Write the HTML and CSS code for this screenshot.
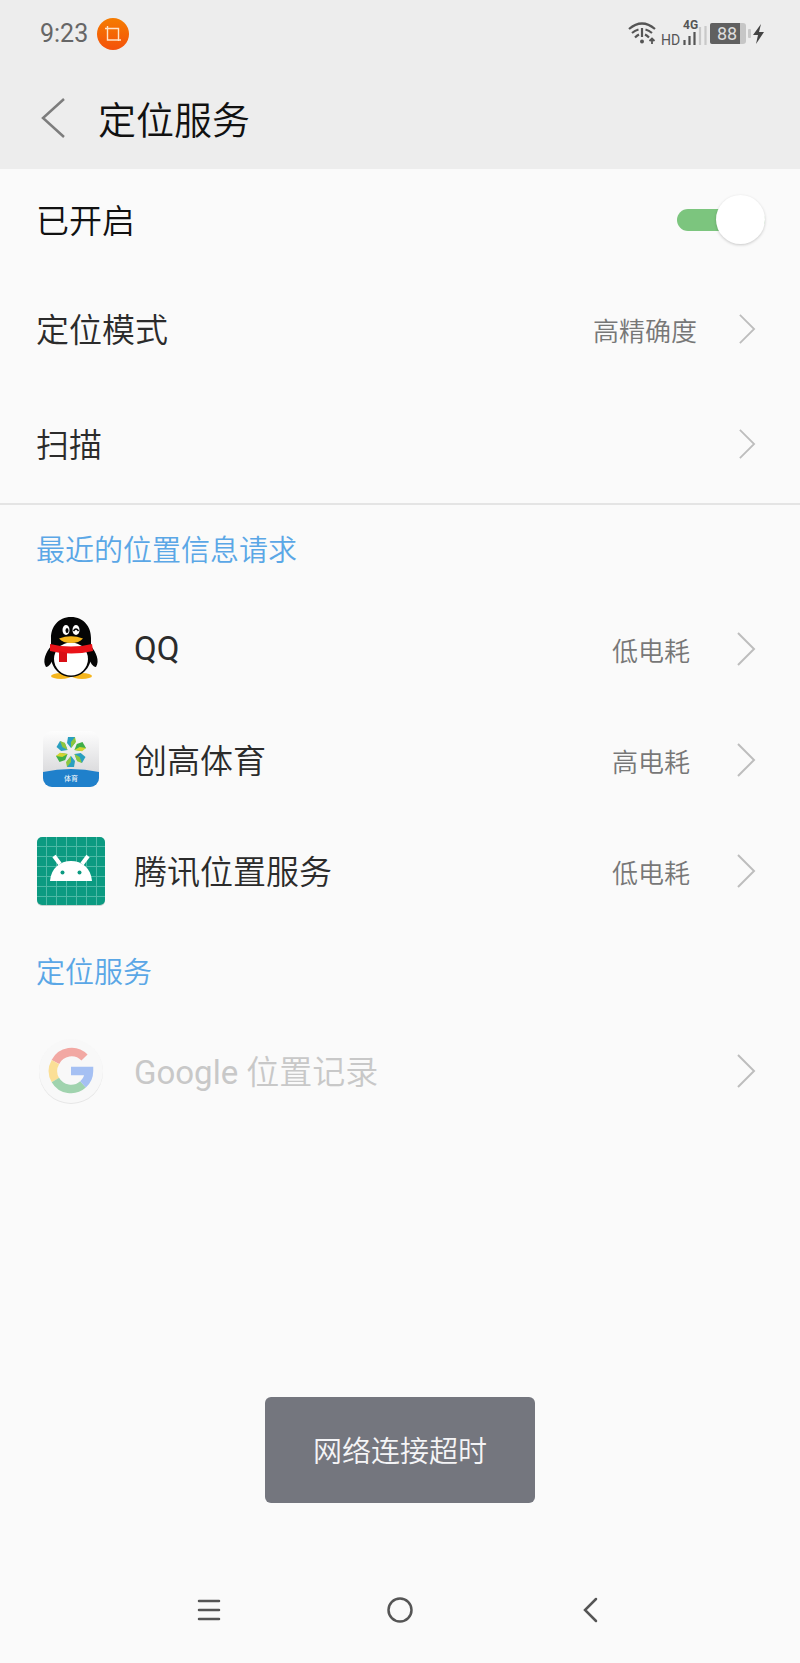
FILE: index.html
```
<!DOCTYPE html>
<html lang="zh-CN">
<head>
    <meta charset="UTF-8">
    <meta name="viewport" content="width=device-width, initial-scale=1.0">
    <title>定位服务</title>
    <link rel="stylesheet" href="styles.css">
</head>
<body>

    <svg class="defs" aria-hidden="true">
        <symbol id="arrow" viewBox="0 0 20 36">
            <path d="M2 2 L18 18 L2 34" fill="none" stroke="#bdbdbd" stroke-width="2"/>
        </symbol>
    </svg>

    <header class="header">
        <div class="status-bar">
            <span class="time">9:23</span>
            <svg class="crop-icon" viewBox="0 0 32 32">
                <defs>
                    <linearGradient id="orange" x1="0" y1="0" x2="0" y2="1">
                        <stop offset="0" stop-color="#f57c00"/>
                        <stop offset="1" stop-color="#f4510b"/>
                    </linearGradient>
                </defs>
                <circle cx="16" cy="16" r="16" fill="url(#orange)"/>
                <path d="M8 10.5H21.5V23M10.500 8V22H24" fill="none" stroke="#ffe3c8" stroke-width="1.400"/>
            </svg>
            <svg class="status-icons" viewBox="0 0 140 40">
                <!-- wifi -->
                <g fill="none" stroke="#555" stroke-width="2.200">
                    <path d="M4 15Q17 4 30 15"/>
                    <path d="M7 19Q10 16.500 13.500 15.500M20.500 15.500Q24 16.500 27 19"/>
                    <path d="M10 23.500Q12 21.500 14 20.500M20 20.500Q22 21.500 24 23.500"/>
                    <path d="M17 14V23"/>
                    <path d="M27 30V25M24.500 27L27 24.500L29.500 27" stroke-width="1.800"/>
                </g>
                <circle cx="17" cy="27.500" r="2" fill="#555"/>
                <text class="hd" x="36" y="31">HD</text>
                <!-- signal -->
                <text class="net" x="58" y="15">4G</text>
                <path d="M59.500 26V31M64.500 22V31M69.500 18V31" stroke="#555" stroke-width="2.200"/>
                <path d="M75 13V31M80.500 12V31" stroke="#c9c9c9" stroke-width="2.200"/>
                <!-- battery -->
                <rect x="85" y="9" width="36" height="21" rx="3" fill="#c6c6c6"/>
                <path d="M87 9H115V30H87Q85 30 85 28V11Q85 9 87 9Z" fill="#606060"/>
                <rect x="123" y="15" width="3" height="9" rx="1" fill="#c9c9c9"/>
                <text class="level" x="92" y="26">88</text>
                <path d="M136 10L128 21H133L131 30L139 18H134Z" fill="#444"/>
            </svg>
        </div>
        <div class="title-bar">
            <button class="back-button" aria-label="返回">
                <svg width="26" height="42" viewBox="0 0 26 42">
                    <path d="M24 2L3 21L24 40" fill="none" stroke="#7d7d7d" stroke-width="2.500"/>
                </svg>
            </button>
            <h1 class="title">定位服务</h1>
        </div>
    </header>

    <main class="content">
        <div class="row switch-row">
            <label class="label on" for="location">已开启</label>
            <input class="switch" id="location" type="checkbox" role="switch" checked>
        </div>
        <a class="row" href="#mode">
            <span class="label">定位模式</span>
            <span class="value">高精确度</span>
            <svg class="arrow"><use href="#arrow"/></svg>
        </a>
        <a class="row" href="#scan">
            <span class="label">扫描</span>
            <svg class="arrow"><use href="#arrow"/></svg>
        </a>

        <section class="section recent">
            <h2 class="section-title">最近的位置信息请求</h2>
            <a class="row app" href="#qq">
                <svg class="app-icon" viewBox="0 0 70 70">
                    <ellipse cx="25" cy="62" rx="10" ry="3" fill="#f5b51c"/>
                    <ellipse cx="46" cy="62" rx="10" ry="3" fill="#f5b51c"/>
                    <path d="M15 32C10 38 6 47 10 53C13 53 16 48 17 45ZM55 32C60 38 64 47 60 53C57 53 54 48 53 45Z" fill="#050505"/>
                    <path d="M35 3C22 3 15 13 15 24V34C12 49 21 63 35 63S58 49 55 34V24C55 13 48 3 35 3Z" fill="#050505"/>
                    <ellipse cx="35" cy="45" rx="17" ry="16.500" fill="#fff"/>
                    <path d="M14 30Q35 35 56 30L57 37Q35 42 14 37Z" fill="#ea1218"/>
                    <path d="M23 37L31 39V48H23Z" fill="#d90f16"/>
                    <ellipse cx="30" cy="16" rx="3.500" ry="5" fill="#fff"/>
                    <ellipse cx="40" cy="16" rx="3.500" ry="5" fill="#fff"/>
                    <ellipse cx="31" cy="16.500" rx="1.500" ry="2.500" fill="#050505"/>
                    <path d="M37.500 17Q40 13 42.500 17" fill="none" stroke="#050505" stroke-width="1.500"/>
                    <path d="M23 24.500Q35 20 47 24.500Q43 29 35 29T23 24.500Z" fill="#f5b51c"/>
                </svg>
                <span class="label latin">QQ</span>
                <span class="value">低电耗</span>
                <svg class="arrow"><use href="#arrow"/></svg>
            </a>
            <a class="row app" href="#sport">
                <svg class="app-icon" viewBox="0 0 70 70">
                    <defs>
                        <linearGradient id="silver" x1="0" y1="0" x2="0" y2="1">
                            <stop offset="0" stop-color="#fdfdfd"/>
                            <stop offset="1" stop-color="#cfcfd2"/>
                        </linearGradient>
                        <clipPath id="tile"><rect x="7" y="6" width="56" height="56" rx="9"/></clipPath>
                        <g id="leaf">
                            <path d="M35 23L31 18L32 12L39 12V18Z" fill="#2a9fc0"/>
                            <path d="M35 23L35 17L39 12L40 17Z" fill="#8cc63f"/>
                        </g>
                        <g id="leaf-green">
                            <path d="M35 23L31 18L32 12L39 12V18Z" fill="#3fae49"/>
                            <path d="M35 23L35 17L39 12L40 17Z" fill="#d3d531"/>
                        </g>
                    </defs>
                    <g clip-path="url(#tile)">
                        <rect x="7" y="6" width="56" height="56" fill="url(#silver)"/>
                        <path d="M7 47Q35 41 63 47V62H7Z" fill="#1f80cb"/>
                    </g>
                    <use href="#leaf"/>
                    <use href="#leaf-green" transform="rotate(60 35 27)"/>
                    <use href="#leaf" transform="rotate(120 35 27)"/>
                    <use href="#leaf" transform="rotate(180 35 27)"/>
                    <use href="#leaf-green" transform="rotate(240 35 27)"/>
                    <use href="#leaf" transform="rotate(300 35 27)"/>
                    <text class="tile-text" x="35" y="56">体育</text>
                </svg>
                <span class="label">创高体育</span>
                <span class="value">高电耗</span>
                <svg class="arrow"><use href="#arrow"/></svg>
            </a>
            <a class="row app" href="#tencent">
                <svg class="app-icon" viewBox="0 0 70 70">
                    <rect x="1" y="2" width="68" height="68" rx="5" fill="#c9d3d0"/>
                    <rect x="1" y="1" width="68" height="68" rx="5" fill="#0b9a81"/>
                    <path d="M10.500 1V69M20.500 1V69M30.500 1V69M40.500 1V69M50.500 1V69M60.500 1V69M1 10.500H69M1 20.500H69M1 30.500H69M1 40.500H69M1 50.500H69M1 60.500H69" stroke="#4db8a5" stroke-width="1"/>
                    <path d="M18 20L24 28M52 20L46 28" stroke="#fff" stroke-width="4"/>
                    <path d="M14 45C15 32 24 25 35 25S55 32 56 45Z" fill="#fff"/>
                    <circle cx="26.500" cy="36.500" r="2" fill="#0b9a81"/>
                    <circle cx="43.500" cy="36.500" r="2" fill="#0b9a81"/>
                </svg>
                <span class="label">腾讯位置服务</span>
                <span class="value">低电耗</span>
                <svg class="arrow"><use href="#arrow"/></svg>
            </a>
        </section>

        <section class="section">
            <h2 class="section-title">定位服务</h2>
            <a class="row app disabled" href="#google">
                <svg class="app-icon" viewBox="0 0 70 70">
                    <circle cx="35" cy="36" r="32" fill="#e6e6e6"/>
                    <circle cx="35" cy="35" r="32" fill="#f8f8f8"/>
                    <g fill="none" stroke-width="8.500">
                        <path d="M48.500 21.500A18 18 0 0 0 19.400 26" stroke="#f2a8a3"/>
                        <path d="M19.400 26A18 18 0 0 0 19.400 44" stroke="#fbdf96"/>
                        <path d="M19.400 44A18 18 0 0 0 47 48.400" stroke="#a0d3ae"/>
                        <path d="M47 48.400A18 18 0 0 0 53 35H35" stroke="#a5c0f3"/>
                    </g>
                </svg>
                <span class="label"><span class="latin">Google</span> 位置记录</span>
                <svg class="arrow"><use href="#arrow"/></svg>
            </a>
        </section>
    </main>

    <div class="toast-area">
        <div class="toast" role="status">网络连接超时</div>
    </div>

    <nav class="nav-bar">
        <button class="nav-button" aria-label="菜单">
            <svg width="30" height="30" viewBox="0 0 30 30">
                <path d="M5 6H25M5 15H25M5 24H25"/>
            </svg>
        </button>
        <button class="nav-button" aria-label="主页">
            <svg width="30" height="30" viewBox="0 0 30 30">
                <circle cx="15" cy="15" r="11.500"/>
            </svg>
        </button>
        <button class="nav-button" aria-label="返回">
            <svg width="30" height="30" viewBox="0 0 30 30">
                <path d="M20 4L9 15L20 26"/>
            </svg>
        </button>
    </nav>

</body>
</html>
```
FILE: styles.css
```
* {
    box-sizing: border-box;
}

body {
    margin: 0;
    min-height: 100vh;
    display: flex;
    flex-direction: column;
    background-color: #fafafa;
    color: #2b2b2b;
    font-family: Roboto, "Noto Sans CJK SC", sans-serif;
    font-weight: 350;
}

button {
    padding: 0;
    border: none;
    background-color: transparent;
    cursor: pointer;
}

svg {
    display: block;
    flex-shrink: 0;
}

.defs {
    position: absolute;
    width: 0;
    height: 0;
}

.header {
    background-color: #ededed;
}

.status-bar {
    display: flex;
    align-items: center;
    height: 67px;
    padding: 0 35px 0 40px;
}

.time {
    color: #666;
    font-size: 25px;
    font-weight: 400;
}

.crop-icon {
    width: 32px;
    height: 32px;
    margin-left: 9px;
}

.status-icons {
    width: 140px;
    height: 40px;
    margin-left: auto;
}

.hd {
    font-size: 14px;
    font-weight: 400;
    fill: #555;
}

.net {
    font-size: 12px;
    font-weight: 700;
    fill: #555;
}

.level {
    font-size: 18px;
    font-weight: 400;
    fill: #ddd;
}

.tile-text {
    font-size: 7px;
    font-weight: 400;
    fill: #fff;
    text-anchor: middle;
}

.title-bar {
    display: flex;
    align-items: center;
    gap: 32px;
    height: 102px;
    padding: 0 40px;
}

.title {
    margin: 0;
    padding-bottom: 2px;
    color: #111;
    font-size: 38px;
    font-weight: 350;
}

.row {
    display: flex;
    align-items: center;
    height: 115px;
    padding: 0 44px 3px 36px;
    color: inherit;
    text-decoration: none;
}

.switch-row {
    height: 104px;
    padding-right: 35px;
}

.label {
    flex: 1;
    padding-bottom: 2px;
    font-size: 33px;
}

.latin {
    font-weight: 400;
}

.on {
    color: #111;
}

.value {
    margin-right: 41px;
    color: #777;
    font-size: 26px;
}

.arrow {
    width: 18px;
    height: 32px;
}

.switch {
    appearance: none;
    display: flex;
    align-items: center;
    width: 88px;
    height: 22px;
    margin: 0;
    background-color: #7cc57e;
    border-radius: 11px;
    cursor: pointer;
}

.switch::before {
    content: "";
    flex-shrink: 0;
    width: 49px;
    height: 49px;
    margin-left: auto;
    border-radius: 50%;
    background-color: #fff;
    box-shadow: 0 1px 3px rgba(0,0,0,0.2);
}

.recent {
    border-top: 2px solid #e4e4e4;
}

.section-title {
    display: flex;
    align-items: center;
    height: 89px;
    margin: 0;
    padding: 0 36px 4px;
    color: #5aa7e6;
    font-size: 29px;
    font-weight: 350;
}

.app {
    height: 111px;
    padding-bottom: 1px;
}

.app .value {
    margin-right: 46px;
}

.app .arrow {
    width: 20px;
    height: 36px;
}

.app-icon {
    width: 70px;
    height: 70px;
    margin-right: 28px;
}

.disabled .label {
    color: #c8c8c8;
}

.toast-area {
    position: fixed;
    left: 0;
    right: 0;
    bottom: 160px;
    display: flex;
    justify-content: center;
}

.toast {
    padding: 34px 48px 30px;
    border-radius: 6px;
    background-color: #74767e;
    color: #f4f4f6;
    font-size: 29px;
    line-height: 42px;
}

.nav-bar {
    display: flex;
    justify-content: center;
    align-items: center;
    gap: 161px;
    height: 106px;
    margin-top: auto;
}

.nav-button {
    fill: none;
    stroke: #555;
    stroke-width: 2.5px;
    stroke-linecap: round;
}
```
